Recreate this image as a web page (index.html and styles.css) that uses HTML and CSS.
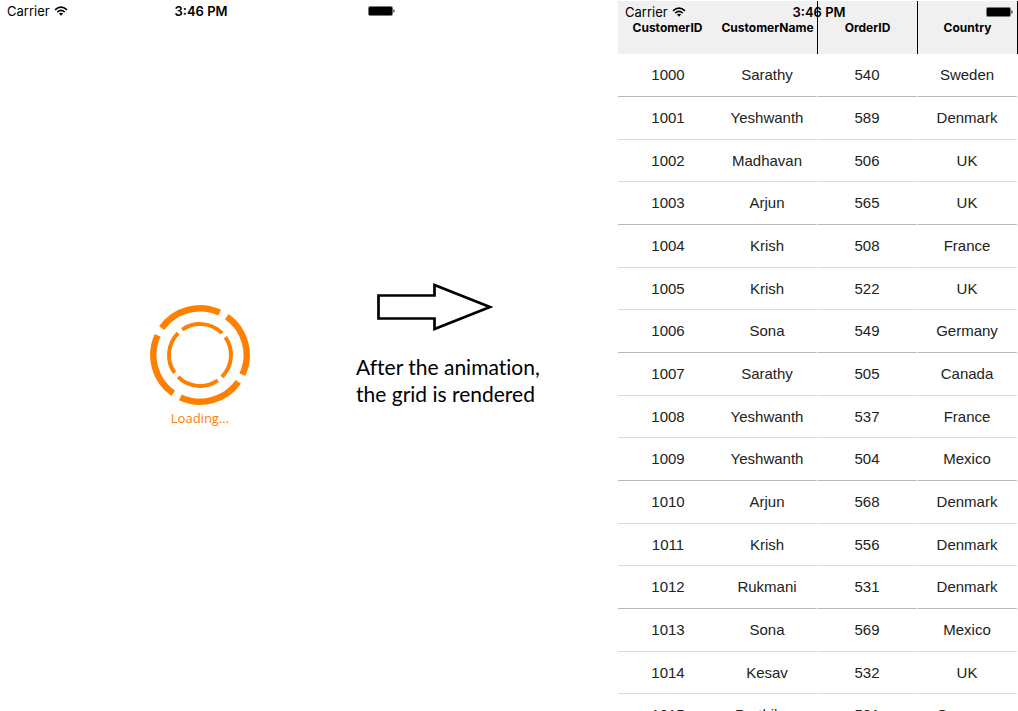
FILE: index.html
```html
<!DOCTYPE html>
<html lang="en">
<head>
<meta charset="utf-8">
<title>Grid loading animation</title>
<link rel="stylesheet" href="styles.css">
</head>
<body>
<svg class="defs" aria-hidden="true">
  <symbol id="wifi" viewBox="0 0 14 10">
    <path d="M1 3.8Q7-1.6 13 3.8M3.3 6.1Q7 2.8 10.7 6.1" fill="none" stroke="#000" stroke-width="1.6"/>
    <path d="M4.9 7.6Q7 5.8 9.1 7.6L7 9.8Z"/>
  </symbol>
  <symbol id="battery" viewBox="0 0 27 10">
    <rect x=".5" y=".5" width="24" height="9" rx="1" fill="#fff" stroke="#777"/>
    <rect x="1" y="1" width="23" height="8" rx=".5"/>
    <path d="M25.5 3Q27.6 5 25.5 7Z"/>
  </symbol>
</svg>
<main class="stage">
  <section class="phone">
    <header class="status">
      <span class="carrier">Carrier <svg class="wifi"><use href="#wifi"/></svg></span>
      <time class="clock">3:46 PM</time>
      <svg class="battery"><use href="#battery"/></svg>
    </header>
    <div class="loader" role="status">
      <svg class="rings" viewBox="0 0 100 100" fill="none" stroke="#ff8000">
        <g id="arcs">
          <path d="M11.7 23.2A46.7 46.7 0 0 1 69.7 7.7" stroke-width="6.4"/>
          <path d="M32.2 24.6A31 31 0 0 1 71.9 28.1" stroke-width="4"/>
        </g>
        <use href="#arcs" transform="rotate(90 50 50)"/>
        <use href="#arcs" transform="rotate(180 50 50)"/>
        <use href="#arcs" transform="rotate(270 50 50)"/>
      </svg>
      <span class="loading">Loading...</span>
    </div>
  </section>
  <section class="note">
    <svg class="arrow" viewBox="0 0 116 48"><path d="M1.5 12.5H57.5V2L113 24L57.5 46V35.5H1.5Z" fill="#fff" stroke="#000" stroke-width="2.7"/></svg>
    <p class="caption">After the animation,<br>the grid is rendered</p>
  </section>
  <section class="phone">
    <header class="status over">
      <span class="carrier">Carrier <svg class="wifi"><use href="#wifi"/></svg></span>
      <time class="clock">3:46 PM</time>
      <svg class="battery"><use href="#battery"/></svg>
    </header>
    <table class="grid">
      <thead><tr><th>CustomerID</th><th>CustomerName</th><th>OrderID</th><th>Country</th></tr></thead>
      <tbody>
        <tr><td>1000</td><td>Sarathy</td><td>540</td><td>Sweden</td></tr>
        <tr><td>1001</td><td>Yeshwanth</td><td>589</td><td>Denmark</td></tr>
        <tr><td>1002</td><td>Madhavan</td><td>506</td><td>UK</td></tr>
        <tr><td>1003</td><td>Arjun</td><td>565</td><td>UK</td></tr>
        <tr><td>1004</td><td>Krish</td><td>508</td><td>France</td></tr>
        <tr><td>1005</td><td>Krish</td><td>522</td><td>UK</td></tr>
        <tr><td>1006</td><td>Sona</td><td>549</td><td>Germany</td></tr>
        <tr><td>1007</td><td>Sarathy</td><td>505</td><td>Canada</td></tr>
        <tr><td>1008</td><td>Yeshwanth</td><td>537</td><td>France</td></tr>
        <tr><td>1009</td><td>Yeshwanth</td><td>504</td><td>Mexico</td></tr>
        <tr><td>1010</td><td>Arjun</td><td>568</td><td>Denmark</td></tr>
        <tr><td>1011</td><td>Krish</td><td>556</td><td>Denmark</td></tr>
        <tr><td>1012</td><td>Rukmani</td><td>531</td><td>Denmark</td></tr>
        <tr><td>1013</td><td>Sona</td><td>569</td><td>Mexico</td></tr>
        <tr><td>1014</td><td>Kesav</td><td>532</td><td>UK</td></tr>
        <tr><td>1015</td><td>Parthiban</td><td>501</td><td>Germany</td></tr>
      </tbody>
    </table>
  </section>
</main>
</body>
</html>
```

FILE: styles.css
```css
* { box-sizing: border-box; }
body {
  margin: 0;
  background: #fff;
  color: #000;
  font-family: Inter, "Liberation Sans", sans-serif;
}
.defs { position: absolute; width: 0; height: 0; }
.stage {
  display: grid;
  grid-template-columns: 400fr 218fr 400fr;
  height: 100vh;
  overflow: hidden;
}
.phone {
  position: relative;
  display: flex;
  flex-direction: column;
  min-width: 0;
}
.status {
  display: grid;
  grid-template-columns: 1fr auto 1fr;
  align-items: center;
  height: 22px;
  padding: 0 5px 0 7px;
  font-size: 13px;
  line-height: 22px;
}
.over { position: absolute; top: 1px; left: 0; right: 0; }
.carrier { display: flex; align-items: center; gap: 4px; }
.wifi { width: 14px; height: 10px; }
.clock { font-weight: 600; }
.battery { width: 27px; height: 10px; justify-self: end; }
.loader {
  flex: 1;
  display: flex;
  flex-direction: column;
  align-items: center;
  justify-content: center;
  gap: 4px;
  padding-bottom: 27px;
}
.rings { width: 100px; height: 100px; }
.loading {
  color: #ff8000;
  font: 13px/18px "Open Sans", sans-serif;
}
.note {
  display: flex;
  flex-direction: column;
  justify-content: center;
  gap: 22px;
  margin-left: -44px;
  padding-bottom: 48px;
}
.arrow { width: 116px; height: 48px; margin-left: 21px; }
.caption {
  margin: 0;
  font: 21px/27px Lato, sans-serif;
  font-variant-ligatures: none;
  white-space: nowrap;
}
.grid {
  width: 100%;
  margin-top: 1px;
  table-layout: fixed;
  border-collapse: separate;
  border-spacing: 0;
}
th {
  height: 53px;
  padding: 0;
  background: #f0f0f0;
  border-right: 1px solid #000;
  font-size: 12px;
  font-weight: 700;
  text-align: center;
}
th:first-child { border-right-color: #f0f0f0; }
td {
  height: 43px;
  padding: 0;
  border-bottom: 1px solid #dcdcdc;
  color: #222;
  font: 15px/20px "Liberation Sans", sans-serif;
  text-align: center;
}
td:nth-child(n+2) { border-right: 2px solid #fff; }
tr:nth-child(3n+1) td { border-bottom-color: #b8b8b8; }
tr:nth-child(3n) td { height: 42px; }
```
